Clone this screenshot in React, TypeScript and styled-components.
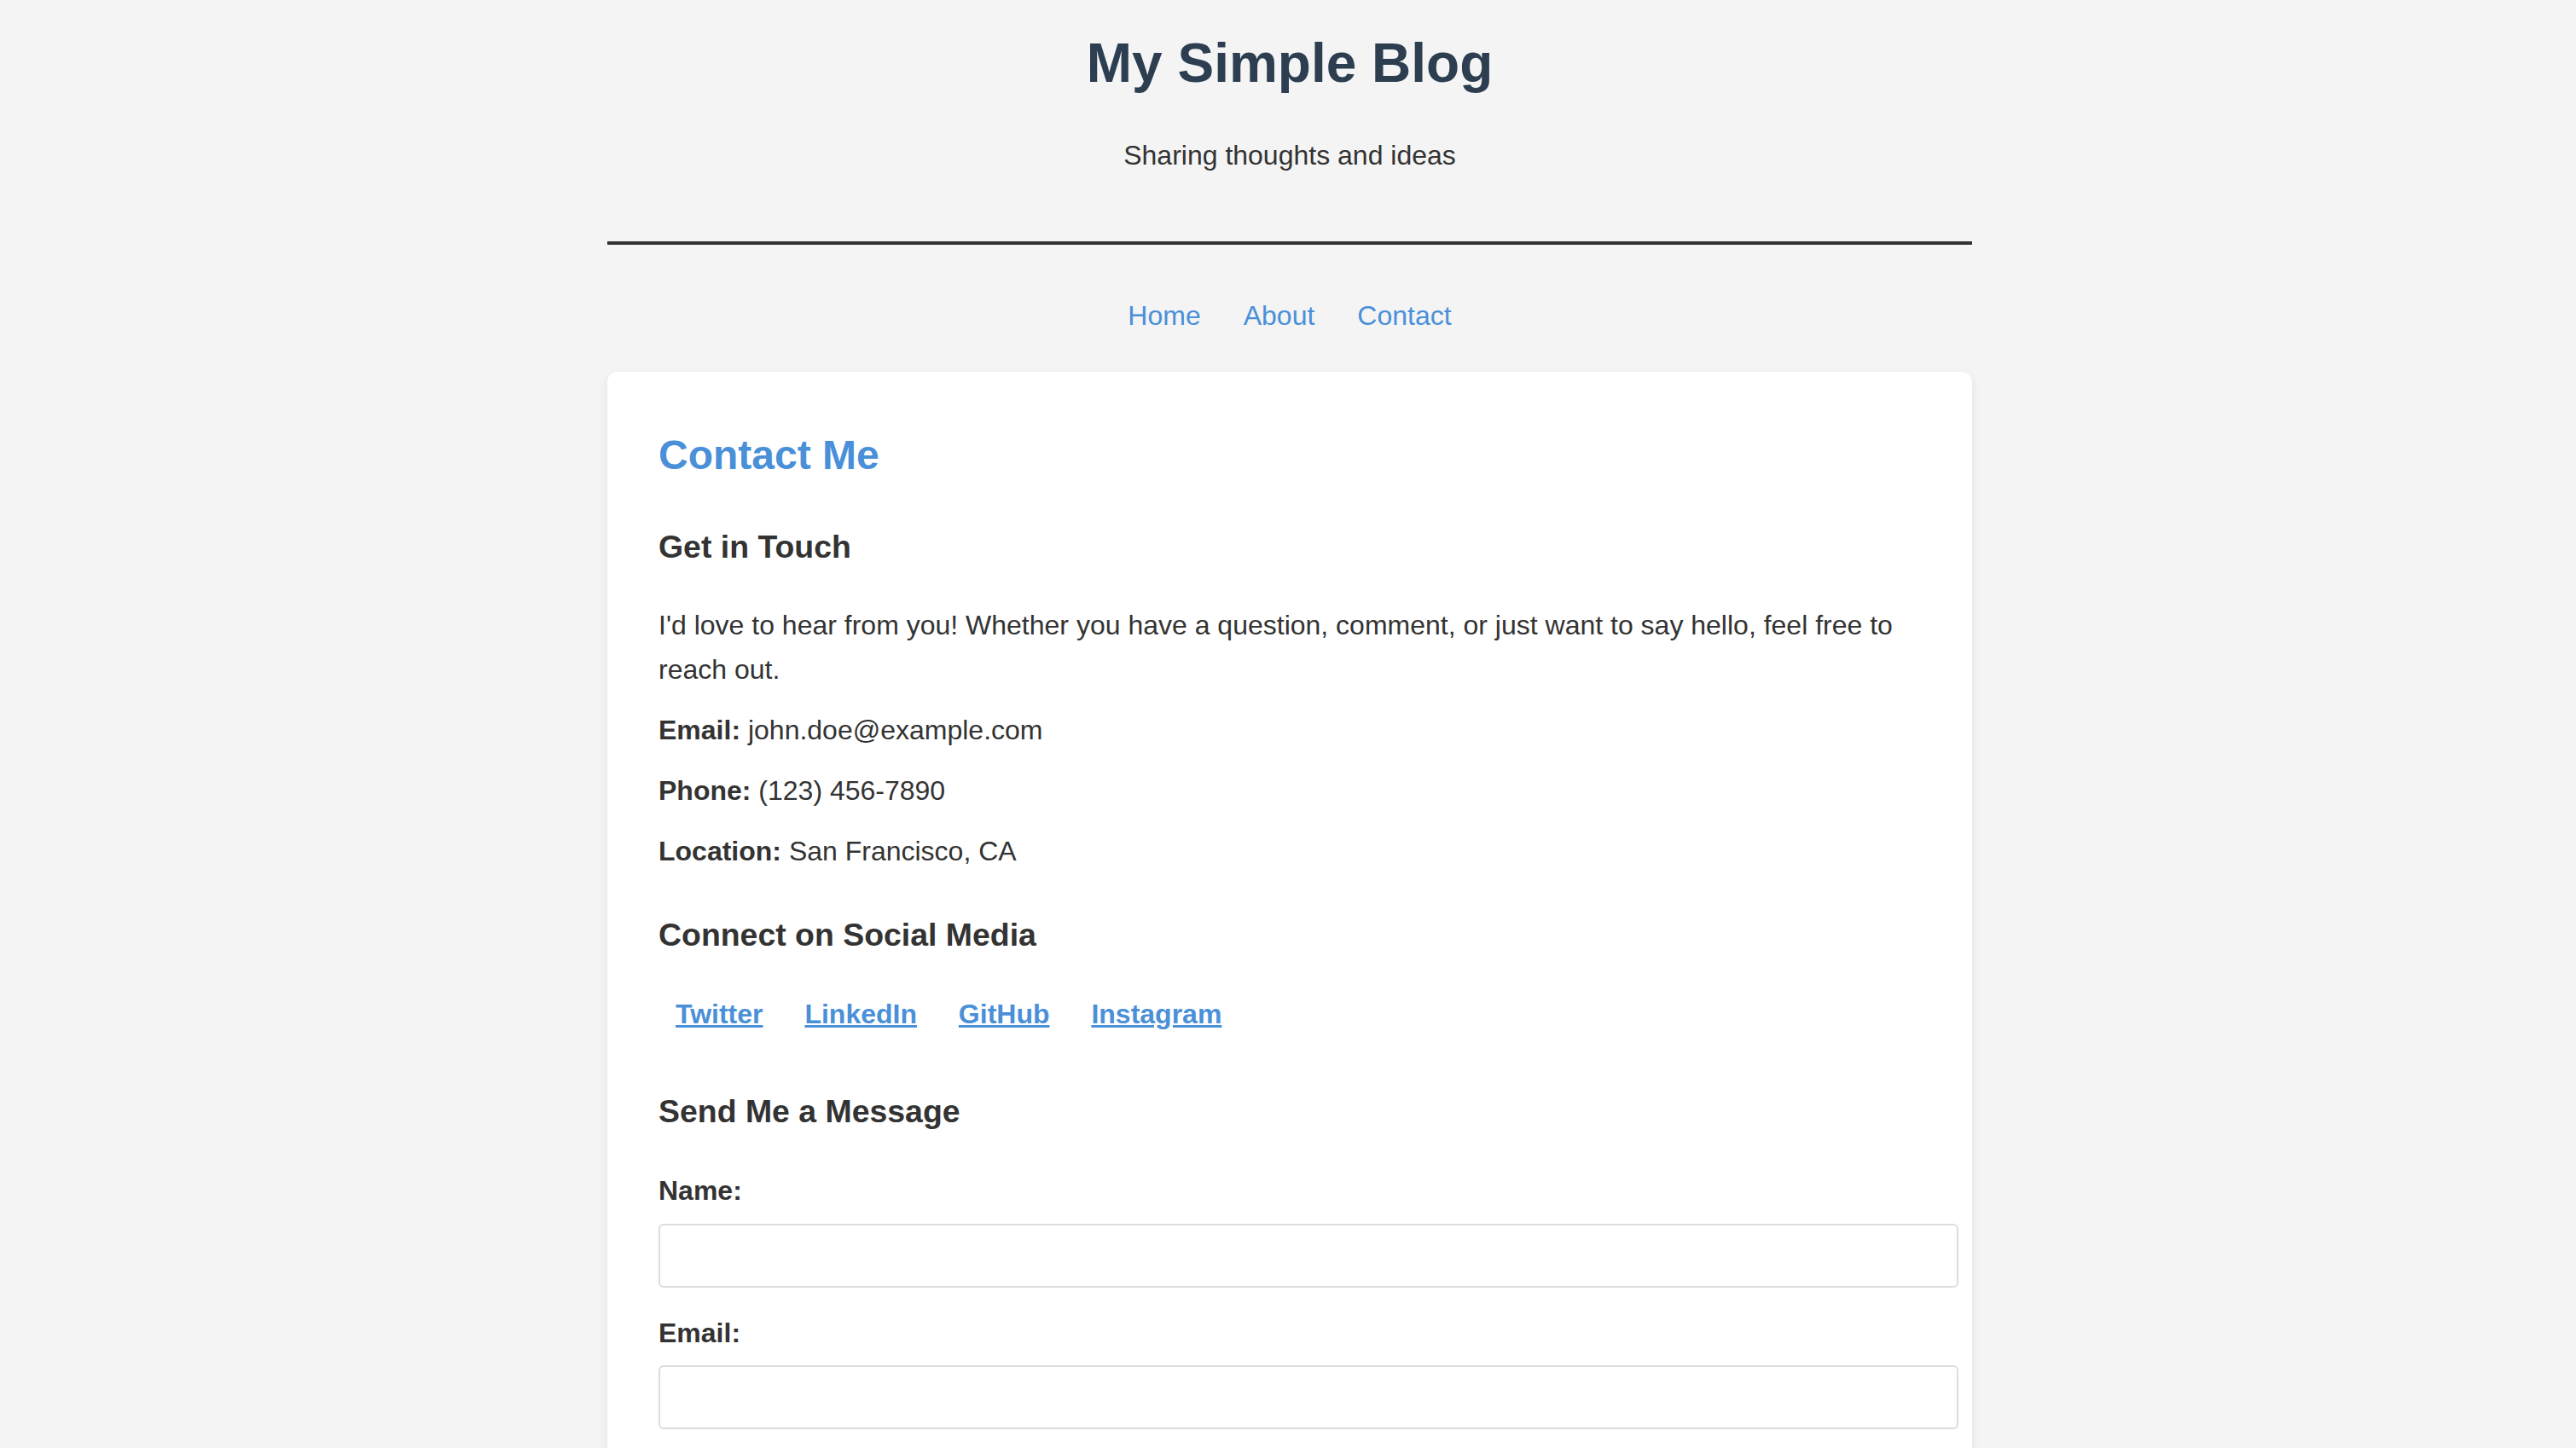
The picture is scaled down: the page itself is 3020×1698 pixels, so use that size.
import React from "react";
import styled, { createGlobalStyle } from "styled-components";

const GlobalStyle = createGlobalStyle`
  html, body {
    margin: 0;
    padding: 0;
  }
  body {
    padding-left: 4px;
    background: #f4f4f4;
    color: #333;
    font-family: "Liberation Sans", Arial, Helvetica, sans-serif;
    line-height: 1.6;
  }
  * {
    box-sizing: content-box;
  }
`;

const Page = styled.div`
  max-width: 1600px;
  margin: 0 auto;
`;

const Header = styled.header`
  text-align: center;
  padding: 23px 0 74px;
  border-bottom: 4px solid #333;
`;

const SiteTitle = styled.h1`
  margin: 0;
  font-size: 64px;
  font-weight: 700;
  color: #2c3e50;
`;

const Tagline = styled.p`
  margin: 32px 0 0;
  font-size: 32px;
  color: #333;
`;

const Nav = styled.nav`
  display: flex;
  justify-content: center;
  gap: 50px;
  margin-top: 58px;
`;

const NavLink = styled.a`
  font-size: 32px;
  color: #4a90d9;
  text-decoration: none;
`;

const Card = styled.main`
  margin-top: 40px;
  background: #fff;
  border-radius: 12px;
  padding: 60px;
  box-shadow: 0 4px 12px rgba(0, 0, 0, 0.08);
  min-height: 1400px;
`;

const PageTitle = styled.h2`
  margin: 0 0 39px;
  font-size: 48px;
  font-weight: 700;
  color: #4a90d9;
`;

const SectionTitle = styled.h3<{ $top?: number }>`
  margin: ${(p) => p.$top ?? 0}px 0 37px;
  font-size: 37.44px;
  font-weight: 700;
  color: #333;
`;

const Text = styled.p`
  margin: 0 0 20px;
  font-size: 32px;
`;

const Strong = styled.strong`
  font-weight: 700;
`;

const SocialRow = styled.div`
  margin-top: 37px;
  font-size: 32px;
`;

const SocialLink = styled.a`
  margin: 0 20px;
  font-weight: 700;
  color: #4a90d9;
  text-decoration: underline;
`;

const FormGroup = styled.div`
  margin-bottom: 28px;
`;

const Label = styled.label`
  display: block;
  font-size: 32px;
  font-weight: 700;
  margin-bottom: 12px;
`;

const Input = styled.input`
  display: block;
  box-sizing: content-box;
  width: 100%;
  margin: 0;
  padding: 20px;
  border: 2px solid #ddd;
  border-radius: 6px;
  background: #fff;
  font-family: "Liberation Sans", Arial, sans-serif;
  font-size: 26.67px;
  line-height: normal;
  outline: none;
`;

export default function App() {
  return (
    <>
      <GlobalStyle />
      <Page>
        <Header>
          <SiteTitle>My Simple Blog</SiteTitle>
          <Tagline>Sharing thoughts and ideas</Tagline>
        </Header>
        <Nav>
          <NavLink href="#">Home</NavLink>
          <NavLink href="#">About</NavLink>
          <NavLink href="#">Contact</NavLink>
        </Nav>
        <Card>
          <PageTitle>Contact Me</PageTitle>
          <SectionTitle>Get in Touch</SectionTitle>
          <Text>
            I'd love to hear from you! Whether you have a question, comment, or just want to say hello, feel free to reach out.
          </Text>
          <Text>
            <Strong>Email:</Strong> john.doe@example.com
          </Text>
          <Text>
            <Strong>Phone:</Strong> (123) 456-7890
          </Text>
          <Text>
            <Strong>Location:</Strong> San Francisco, CA
          </Text>
          <SectionTitle $top={43}>Connect on Social Media</SectionTitle>
          <SocialRow>
            <SocialLink href="#">Twitter</SocialLink>{" "}
            <SocialLink href="#">LinkedIn</SocialLink>{" "}
            <SocialLink href="#">GitHub</SocialLink>{" "}
            <SocialLink href="#">Instagram</SocialLink>
          </SocialRow>
          <SectionTitle $top={59}>Send Me a Message</SectionTitle>
          <form onSubmit={(e) => e.preventDefault()}>
            <FormGroup>
              <Label htmlFor="name">Name:</Label>
              <Input id="name" type="text" />
            </FormGroup>
            <FormGroup>
              <Label htmlFor="email">Email:</Label>
              <Input id="email" type="email" />
            </FormGroup>
          </form>
        </Card>
      </Page>
    </>
  );
}
